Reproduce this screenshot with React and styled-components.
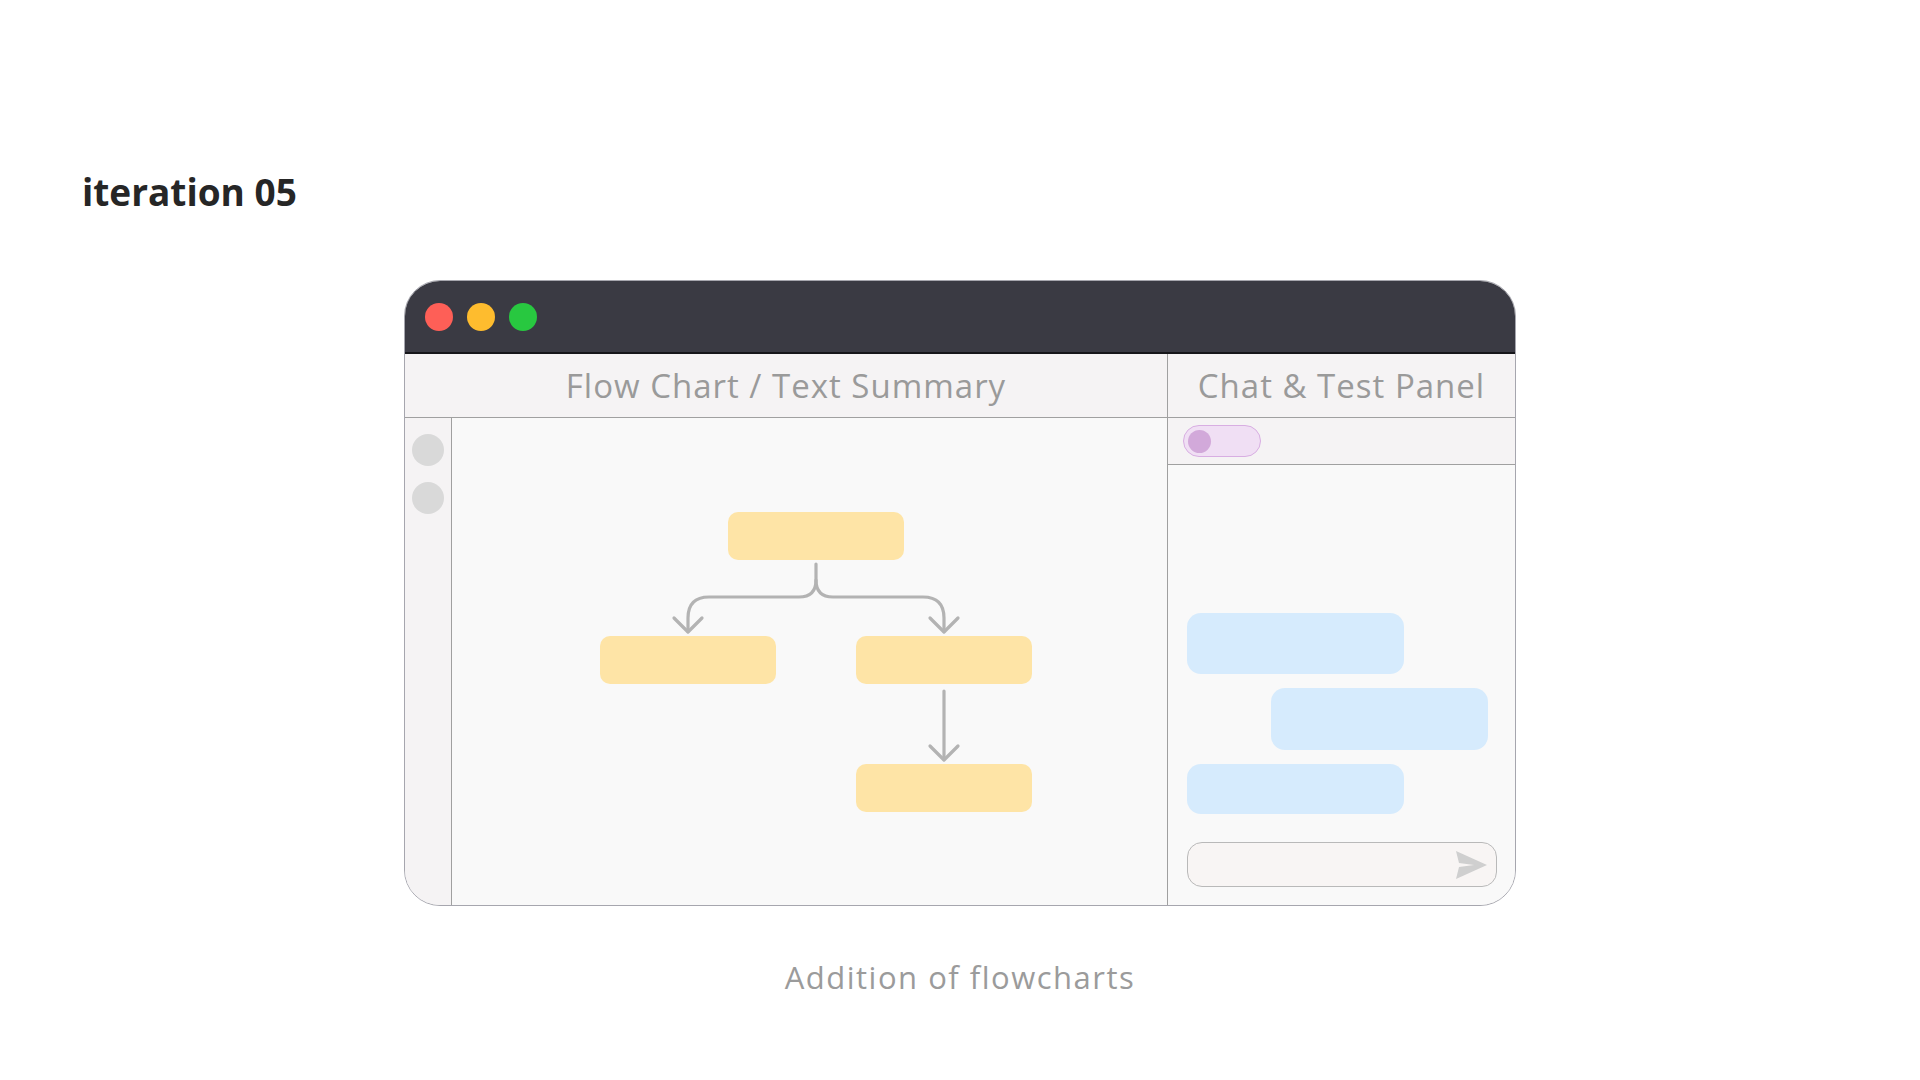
import styled, { createGlobalStyle } from 'styled-components';

const GlobalStyle = createGlobalStyle`
    html, body {
        margin: 0;
        padding: 0;
        background: #ffffff;
    }
    body {
        font-family: 'Open Sans', 'Noto Sans', sans-serif;
    }
`;

const nodes = [
    { id: 'root', x: 276, y: 94 },
    { id: 'left', x: 148, y: 218 },
    { id: 'right', x: 404, y: 218 },
    { id: 'next', x: 404, y: 346 },
];

const lights = ['#fe5f57', '#febc2e', '#28c840'];

const App = () => {
    return (
        <>
            <GlobalStyle />
            <Page>
                <Title>iteration 05</Title>
                <Window>
                    <TitleBar>
                        {lights.map(color => (
                            <Light key={color} color={color} />
                        ))}
                    </TitleBar>
                    <Body>
                        <LeftPane>
                            <PaneHeader>Flow Chart / Text Summary</PaneHeader>
                            <LeftBody>
                                <Sidebar>
                                    <SideDot />
                                    <SideDot />
                                </Sidebar>
                                <Canvas>
                                    <Connectors
                                        viewBox="0 0 714 487"
                                        width="714"
                                        height="487"
                                    >
                                        <g
                                            fill="none"
                                            stroke="#b3b3b3"
                                            strokeWidth="3.2"
                                            strokeLinecap="round"
                                            strokeLinejoin="round"
                                        >
                                            <path d="M364 146 V162 Q364 179 347 179 H257 Q236 179 236 200 V213" />
                                            <path d="M222 200 L236 214 L250 200" />
                                            <path d="M364 162 Q364 179 381 179 H471 Q492 179 492 200 V213" />
                                            <path d="M478 200 L492 214 L506 200" />
                                            <path d="M492 273 V341" />
                                            <path d="M478 328 L492 342 L506 328" />
                                        </g>
                                    </Connectors>
                                    {nodes.map(node => (
                                        <Node
                                            key={node.id}
                                            style={{ left: node.x, top: node.y }}
                                        />
                                    ))}
                                </Canvas>
                            </LeftBody>
                        </LeftPane>
                        <ChatPane>
                            <PaneHeader>Chat &amp; Test Panel</PaneHeader>
                            <ToggleRow>
                                <Toggle>
                                    <Knob />
                                </Toggle>
                            </ToggleRow>
                            <ChatBody>
                                <Bubble h={61} />
                                <Bubble h={62} mine />
                                <Bubble h={50} />
                                <InputBox>
                                    <svg width="32" height="28" viewBox="0 0 32 28">
                                        <path
                                            d="M1 0 L32 14 L1 28 L4 16 L19 14 L4 12 Z"
                                            fill="#cfcfcf"
                                        />
                                    </svg>
                                </InputBox>
                            </ChatBody>
                        </ChatPane>
                    </Body>
                </Window>
                <Caption>Addition of flowcharts</Caption>
            </Page>
        </>
    );
};

export default App;

const Page = styled.div`
    width: 1920px;
    height: 1080px;
    display: flex;
    flex-direction: column;
    overflow: hidden;
`;

const Title = styled.h1`
    margin: 170px 0 0 82px;
    font-size: 37px;
    line-height: 44px;
    font-weight: 700;
    color: #262626;
`;

const Window = styled.div`
    align-self: center;
    margin-top: 66px;
    width: 1112px;
    height: 626px;
    box-sizing: border-box;
    display: flex;
    flex-direction: column;
    border: 1px solid #a6a6ae;
    border-radius: 36px;
    overflow: hidden;
    background: #f9f9f9;
`;

const TitleBar = styled.div`
    height: 71px;
    flex-shrink: 0;
    display: flex;
    align-items: center;
    gap: 14px;
    padding-left: 20px;
    background: #3a3a43;
    border-bottom: 2px solid #16161a;
`;

const Light = styled.span`
    width: 28px;
    height: 28px;
    border-radius: 50%;
    background: ${({ color }) => color};
`;

const Body = styled.div`
    flex: 1;
    display: grid;
    grid-template-columns: 762px 1fr;
    min-height: 0;
`;

const LeftPane = styled.div`
    display: flex;
    flex-direction: column;
    min-height: 0;
`;

const PaneHeader = styled.div`
    height: 63px;
    flex-shrink: 0;
    display: flex;
    align-items: center;
    justify-content: center;
    background: #f5f3f4;
    border-bottom: 1px solid #a0a0a0;
    font-size: 33px;
    letter-spacing: 1px;
    color: #9a9a9a;
    white-space: nowrap;
`;

const LeftBody = styled.div`
    flex: 1;
    display: flex;
    min-height: 0;
`;

const Sidebar = styled.div`
    width: 46px;
    flex-shrink: 0;
    display: flex;
    flex-direction: column;
    align-items: center;
    gap: 16px;
    padding-top: 16px;
    background: #f5f3f4;
    border-right: 1px solid #a0a0a0;
`;

const SideDot = styled.span`
    width: 32px;
    height: 32px;
    border-radius: 50%;
    background: #d9d9d9;
`;

const Canvas = styled.div`
    position: relative;
    flex: 1;
    background: #f9f9f9;
`;

const Connectors = styled.svg`
    position: absolute;
    left: 0;
    top: 0;
`;

const Node = styled.div`
    position: absolute;
    width: 176px;
    height: 48px;
    border-radius: 10px;
    background: #fee4a6;
`;

const ChatPane = styled.div`
    display: flex;
    flex-direction: column;
    border-left: 1px solid #a0a0a0;
    min-height: 0;
`;

const ToggleRow = styled.div`
    height: 46px;
    flex-shrink: 0;
    display: flex;
    align-items: center;
    padding-left: 15px;
    background: #f5f3f4;
    border-bottom: 1px solid #a0a0a0;
`;

const Toggle = styled.div`
    width: 78px;
    height: 32px;
    box-sizing: border-box;
    display: flex;
    align-items: center;
    padding-left: 4px;
    border: 1px solid #d8aee2;
    border-radius: 16px;
    background: #f0dff4;
`;

const Knob = styled.span`
    width: 23px;
    height: 23px;
    border-radius: 50%;
    background: #d2a9da;
`;

const ChatBody = styled.div`
    flex: 1;
    display: flex;
    flex-direction: column;
    justify-content: flex-end;
    gap: 14px;
    padding: 0 18px 18px 19px;
    background: #f9f9f9;
`;

const Bubble = styled.div`
    width: 217px;
    height: ${({ h }) => h}px;
    align-self: ${({ mine }) => (mine ? 'flex-end' : 'flex-start')};
    margin-right: ${({ mine }) => (mine ? '9px' : '0')};
    border-radius: 14px;
    background: #d6ebfd;
`;

const InputBox = styled.div`
    height: 45px;
    box-sizing: border-box;
    margin-top: 14px;
    display: flex;
    align-items: center;
    justify-content: flex-end;
    padding-right: 9px;
    border: 1px solid #b9b9b9;
    border-radius: 15px;
    background: #f8f5f4;
`;

const Caption = styled.p`
    align-self: center;
    margin: 50px 0 0;
    font-size: 31px;
    line-height: 42px;
    letter-spacing: 1.5px;
    color: #9b9b9b;
`;
